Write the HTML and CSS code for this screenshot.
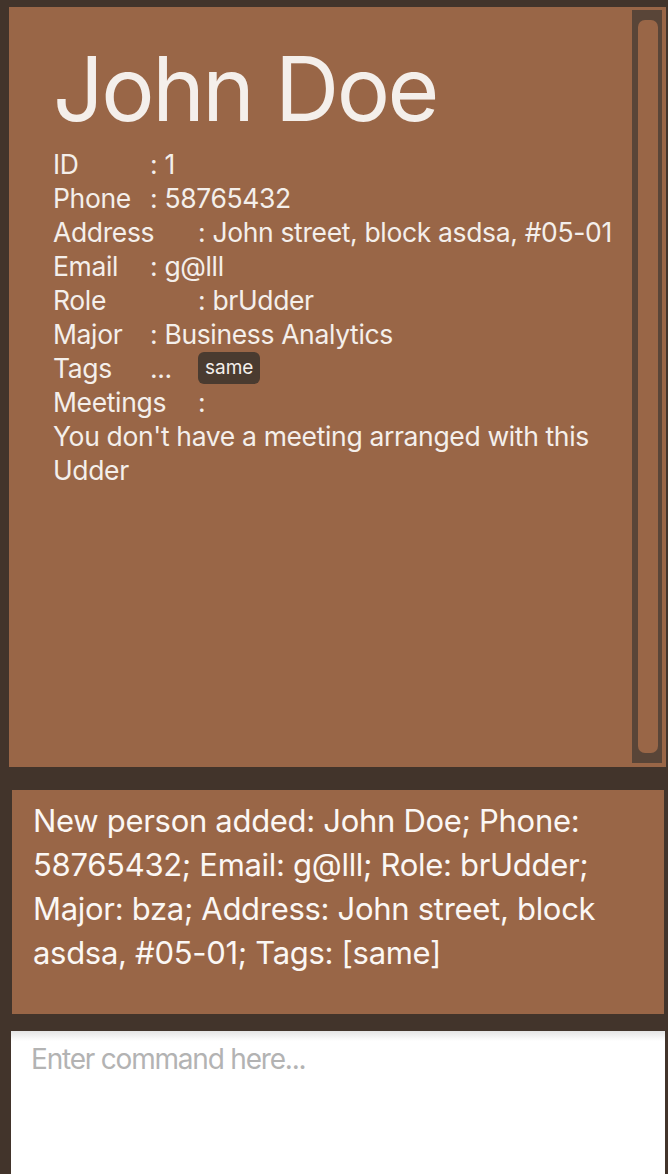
FILE: index.html
```html
<!DOCTYPE html>
<html>
<head>
<meta charset="utf-8">
<link rel="stylesheet" href="styles.css">
</head>
<body>
<div class="app">
  <section class="card-panel">
    <div class="card">
      <h1 class="name">John Doe</h1>
      <div class="row"><span class="label">ID</span><span class="val">: 1</span></div>
      <div class="row"><span class="label">Phone</span><span class="val">: 58765432</span></div>
      <div class="row"><span class="label wide">Address</span><span class="val">: John street, block asdsa, #05-01</span></div>
      <div class="row"><span class="label">Email</span><span class="val">: g@lll</span></div>
      <div class="row"><span class="label wide">Role</span><span class="val">: brUdder</span></div>
      <div class="row"><span class="label">Major</span><span class="val">: Business Analytics</span></div>
      <div class="row"><span class="label">Tags</span><span class="dots">...</span><span class="tag">same</span></div>
      <div class="row"><span class="label wide">Meetings</span><span class="val">:</span></div>
      <p class="meet">You don't have a meeting arranged with this Udder</p>
    </div>
    <div class="track"><div class="thumb"></div></div>
  </section>
  <section class="result">
    New person added: John Doe; Phone: 58765432; Email: g@lll; Role: brUdder; Major: bza; Address: John street, block asdsa, #05-01; Tags: [same]
  </section>
  <section class="command">
    <div class="placeholder">Enter command here...</div>
  </section>
</div>
</body>
</html>
```
FILE: styles.css
```css
html, body {
  margin: 0;
  padding: 0;
  background: #42342b;
  height: 100%;
  overflow: hidden;
}
.app {
  font-family: Inter, "Noto Sans", sans-serif;
  color: #f4efeb;
  display: flex;
  flex-direction: column;
}
.card-panel {
  margin: 7px 2px 0 9px;
  height: 760px;
  background: #996647;
  display: flex;
  padding: 3px 4px 4px 0;
  box-sizing: border-box;
}
.card {
  flex: 1;
  padding: 0 0 0 44px;
}
.name {
  margin: 24px 0 3px 0;
  font-weight: 400;
  font-size: 89px;
  line-height: 110px;
  letter-spacing: -2.5px;
}
.row {
  display: flex;
  align-items: center;
  font-size: 26.5px;
  line-height: 34px;
  letter-spacing: -0.35px;
}
.label {
  width: 97px;
  flex: none;
}
.label.wide {
  width: 145px;
}
.dots {
  width: 48px;
}
.tag {
  background: #4a3b30;
  border-radius: 6px;
  font-size: 19px;
  line-height: 32px;
  padding: 0 7px;
  letter-spacing: 0;
}
.meet {
  margin: 0;
  font-size: 26.5px;
  line-height: 34px;
  letter-spacing: -0.35px;
  width: 560px;
}
.track {
  width: 30px;
  flex: none;
  background: #594538;
  padding: 10px 4px 10px 6px;
  box-sizing: border-box;
  display: flex;
}
.thumb {
  flex: 1;
  background: #996647;
  border-radius: 7px;
}
.result {
  margin: 23px 4px 0 12px;
  height: 224px;
  box-sizing: border-box;
  background: #996647;
  padding: 9px 20px 0 21px;
  font-size: 31px;
  line-height: 44px;
  letter-spacing: -0.3px;
  color: #fbf7f4;
}
.command {
  margin: 17px 3px 0 11px;
  height: 160px;
  background: linear-gradient(#e4e4e4, #ffffff 10px);
  padding: 10px 20px 0 20px;
}
.placeholder {
  font-size: 28px;
  line-height: 36px;
  color: #b3b3b3;
  letter-spacing: -1.2px;
}
```
